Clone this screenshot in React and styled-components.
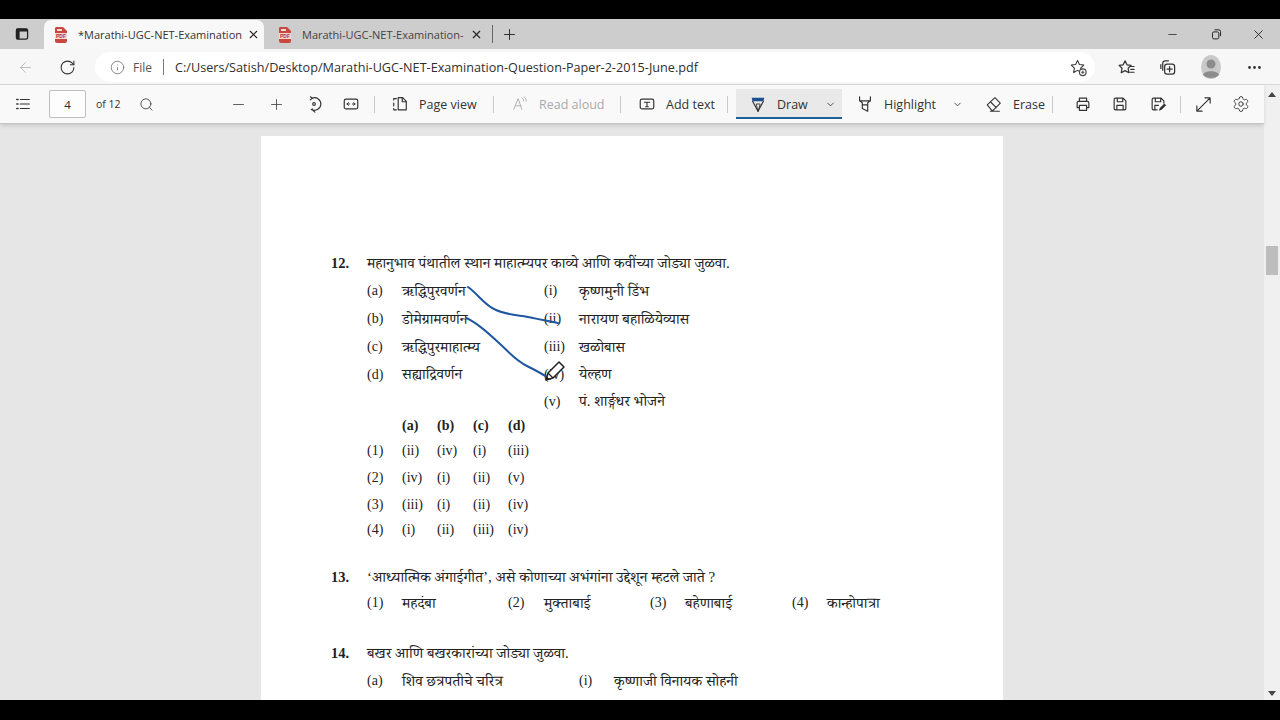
import React from "react";
import styled, { createGlobalStyle } from "styled-components";
import {
  ArrowLeft,
  ChevronDown,
  Info,
  Minus,
  MoreHorizontal,
  Plus,
  RotateCw,
  Search,
  Settings,
  X,
} from "lucide-react";

const Global = createGlobalStyle`
  html, body {
    margin: 0;
    padding: 0;
    background: #000;
  }
`;

const UI_FONT = `"Open Sans", "Noto Sans", "Liberation Sans", sans-serif`;
const DOC_FONT = `"Liberation Serif", "Noto Serif Devanagari", "Noto Sans Devanagari", "Lohit Devanagari", "Noto Sans", serif`;

const Screen = styled.div`
  width: 1280px;
  height: 720px;
  background: #000;
  padding: 19px 0 20px;
  box-sizing: border-box;
  display: flex;
  flex-direction: column;
  overflow: hidden;
  font-family: ${UI_FONT};
  color: #2b2b2b;
`;

/* tab strip */
const TabStrip = styled.div`
  height: 30px;
  flex: none;
  background: #cdcdcd;
  display: flex;
  align-items: flex-end;
`;

const SideButton = styled.div`
  width: 44px;
  height: 30px;
  display: flex;
  align-items: center;
  justify-content: center;
`;

const Tab = styled.div`
  width: ${(p) => p.$w}px;
  height: 29px;
  box-sizing: border-box;
  display: flex;
  align-items: center;
  padding-left: ${(p) => p.$pl}px;
  font-size: 11px;
  color: ${(p) => (p.$active ? "#333" : "#444")};
  background: ${(p) => (p.$active ? "#f8f8f8" : "transparent")};
  border-radius: 7px 7px 0 0;
`;

const TabTitle = styled.span`
  width: ${(p) => p.$w}px;
  margin-left: 10px;
  white-space: nowrap;
`;

const TabClose = styled.span`
  margin-left: 6px;
  display: flex;
`;

const TabDivider = styled.div`
  width: 1px;
  height: 18px;
  margin: 0 0 6px 0;
  background: #666;
`;

const NewTab = styled.div`
  width: 33px;
  height: 30px;
  display: flex;
  align-items: center;
  justify-content: center;
`;

const WindowControls = styled.div`
  margin-left: auto;
  display: flex;
  height: 30px;
  align-items: center;
`;

const WindowButton = styled.div`
  width: 43px;
  display: flex;
  justify-content: center;
`;

/* address bar */
const AddressRow = styled.div`
  height: 36px;
  flex: none;
  background: #f7f7f7;
  border-bottom: 1px solid #d8d8d8;
  box-sizing: border-box;
  padding-top: 1px;
  display: flex;
  align-items: center;
`;

const NavSlot = styled.div`
  width: ${(p) => p.$w}px;
  display: flex;
  justify-content: center;
  flex: none;
`;

const AddressPill = styled.div`
  width: 1000px;
  height: 30px;
  margin-left: 10px;
  flex: none;
  box-sizing: border-box;
  background: #fff;
  border-radius: 15px;
  display: flex;
  align-items: center;
  padding-left: 15px;
  padding-right: 7px;
`;

const FileLabel = styled.span`
  margin-left: 8px;
  font-size: 12px;
  color: #555;
`;

const AddressDivider = styled.span`
  width: 1px;
  height: 16px;
  background: #777;
  margin: 0 11px 0 11px;
`;

const Url = styled.span`
  color: #2f2f2f;
  font-size: 12.65px;
  white-space: nowrap;
`;

const PillEnd = styled.span`
  margin-left: auto;
  display: flex;
`;

const AddressTools = styled.div`
  display: flex;
  align-items: center;
  margin-left: 11px;
`;

const Avatar = styled.svg`
  display: block;
`;

/* viewer body */
const Body = styled.div`
  flex: 1;
  min-height: 0;
  display: flex;
`;

const Viewer = styled.div`
  flex: 1;
  min-width: 0;
  display: flex;
  flex-direction: column;
`;

const Toolbar = styled.div`
  height: 39px;
  flex: none;
  box-sizing: border-box;
  background: #f9f9f9;
  border-bottom: 1px solid #c4c4c4;
  box-shadow: 0 2px 4px rgba(0, 0, 0, 0.12);
  position: relative;
  z-index: 2;
  display: flex;
  align-items: center;
  font-size: 12.5px;
`;

const IconSlot = styled.div`
  width: ${(p) => p.$w || 38}px;
  flex: none;
  display: flex;
  justify-content: center;
  align-items: center;
`;

const PageBox = styled.div`
  width: 37px;
  height: 28px;
  flex: none;
  margin-left: 3px;
  box-sizing: border-box;
  border: 1px solid #bdbdbd;
  border-radius: 2px;
  background: #fdfdfd;
  display: flex;
  align-items: center;
  justify-content: center;
  font-size: 11.5px;
`;

const PageCount = styled.span`
  margin: 0 0 0 10px;
  width: 31px;
  flex: none;
  font-size: 10.5px;
  color: #333;
`;

const Sep = styled.div`
  width: 1px;
  height: 17px;
  flex: none;
  background: #c9c9c9;
  margin: 0 ${(p) => p.$r ?? 11}px 0 ${(p) => p.$l ?? 11}px;
`;

const ToolButton = styled.div`
  flex: none;
  width: ${(p) => p.$w}px;
  height: ${(p) => (p.$active ? 30 : 28)}px;
  box-sizing: border-box;
  display: flex;
  align-items: center;
  gap: ${(p) => p.$gap ?? 8}px;
  padding-left: ${(p) => p.$pl ?? 0}px;
  padding-top: ${(p) => (p.$active ? 2 : 0)}px;
  color: ${(p) => (p.$disabled ? "#a9a9a9" : "#333")};
  background: ${(p) => (p.$active ? "#e9e9e9" : "transparent")};
  border-bottom: ${(p) => (p.$active ? "2px solid #1b6299" : "none")};
`;

const Caret = styled.span`
  display: flex;
  margin-left: ${(p) => p.$ml}px;
`;

const Content = styled.div`
  flex: 1;
  min-height: 0;
  background: #e6e6e6;
  padding-top: 12px;
  display: flex;
  justify-content: center;
  overflow: hidden;
`;

const Scrollbar = styled.div`
  width: 16px;
  flex: none;
  background: #f0f0f0;
  display: flex;
  flex-direction: column;
  align-items: center;
  justify-content: space-between;
  padding: 7px 0 4px;
  box-sizing: border-box;
  position: relative;
`;

const Arrow = styled.div`
  width: 0;
  height: 0;
  border-left: 4px solid transparent;
  border-right: 4px solid transparent;
  border-${(p) => (p.$down ? "top" : "bottom")}: 5px solid #444;
`;

const Thumb = styled.div`
  position: absolute;
  top: 161px;
  left: 2px;
  width: 12px;
  height: 29px;
  background: #bdbdbd;
`;

/* pdf page */
const Page = styled.div`
  width: 742px;
  height: 640px;
  flex: none;
  box-sizing: border-box;
  background: #fff;
  padding: 113px 0 0 70px;
  position: relative;
  font-family: ${DOC_FONT};
  font-size: 14px;
  color: #222;
`;

const Question = styled.div`
  margin-top: ${(p) => p.$mt || 0}px;
`;

const QuestionHead = styled.div`
  display: flex;
  height: 28px;
  line-height: 28px;
`;

const QNo = styled.span`
  width: 36px;
  flex: none;
  font-weight: 700;
  font-size: 14.5px;
`;

const Deva = styled.span`
  font-size: 15px;
`;

const Rows = styled.div`
  padding-left: 36px;
`;

const Row = styled.div`
  display: grid;
  grid-template-columns: ${(p) => p.$cols};
  height: ${(p) => p.$h || 28}px;
  line-height: ${(p) => p.$h || 28}px;
  white-space: nowrap;
`;

const Head = styled.span`
  font-weight: 700;
`;

const Ink = styled.svg`
  position: absolute;
  left: 0;
  top: 0;
  pointer-events: none;
`;

const PenCursor = styled.svg`
  position: absolute;
  left: 282px;
  top: 223px;
`;

const MATCH = "35px 142px 35px 1fr";
const ANSWER = "35px 35px 36px 35px 35px";
const FOUR = "35px 106px 36px 106px 35px 107px 35px 1fr";
const WIDE = "35px 177px 35px 1fr";

const matchRows = [
  ["(a)", "ऋद्धिपुरवर्णन", "(i)", "कृष्णमुनी डिंभ", 28],
  ["(b)", "डोमेग्रामवर्णन", "(ii)", "नारायण बहाळियेव्यास", 28],
  ["(c)", "ऋद्धिपुरमाहात्म्य", "(iii)", "खळोबास", 28],
  ["(d)", "सह्याद्रिवर्णन", "(iv)", "येल्हण", 27],
  ["", "", "(v)", "पं. शार्ङ्गधर भोजने", 27],
];

const answerRows = [
  ["(1)", "(ii)", "(iv)", "(i)", "(iii)", 28],
  ["(2)", "(iv)", "(i)", "(ii)", "(v)", 26],
  ["(3)", "(iii)", "(i)", "(ii)", "(iv)", 28],
  ["(4)", "(i)", "(ii)", "(iii)", "(iv)", 22],
];

const Stroke = ({ d, w = 1.4, fill = "none", color = "#333" }) => (
  <path d={d} fill={fill} stroke={color} strokeWidth={w} strokeLinecap="round" strokeLinejoin="round" />
);

const Icon = ({ size = 18, children }) => (
  <svg width={size} height={size} viewBox="0 0 20 20" fill="none">
    {children}
  </svg>
);

const PdfIcon = () => (
  <svg width="14" height="16" viewBox="0 0 14 16">
    <path d="M2 0h7l4 4v10a2 2 0 0 1-2 2H3a2 2 0 0 1-2-2V1z" fill="#c9473f" />
    <rect x="1" y="6" width="12" height="6" fill="#f3d9d6" />
    <path d="M3 2h5v2H3z" fill="#f3d9d6" />
    <text x="7" y="11" fontSize="5" fontFamily="Liberation Sans" fontWeight="700" textAnchor="middle" fill="#b5342c">PDF</text>
  </svg>
);

export default function App() {
  return (
    <Screen>
      <Global />
      <TabStrip>
        <SideButton>
          <Icon size={16}>
            <rect x="3" y="3.5" width="14" height="13" rx="2" stroke="#222" strokeWidth="1.6" />
            <rect x="3" y="3.5" width="14" height="3.4" fill="#222" />
            <rect x="3" y="3.5" width="4" height="13" fill="#222" />
          </Icon>
        </SideButton>
        <Tab $active $w={220} $pl={10}>
          <PdfIcon />
          <TabTitle $w={163}>*Marathi-UGC-NET-Examination</TabTitle>
          <TabClose>
            <X size={13} color="#222" />
          </TabClose>
        </Tab>
        <Tab $w={228} $pl={14}>
          <PdfIcon />
          <TabTitle $w={162}>Marathi-UGC-NET-Examination-</TabTitle>
          <TabClose>
            <X size={13} color="#222" />
          </TabClose>
        </Tab>
        <TabDivider />
        <NewTab>
          <Plus size={17} strokeWidth={1.3} color="#222" />
        </NewTab>
        <WindowControls>
          <WindowButton>
            <Minus size={13} strokeWidth={1.4} color="#222" />
          </WindowButton>
          <WindowButton>
            <Icon size={14}>
              <rect x="5" y="7" width="9" height="10" rx="2" stroke="#222" strokeWidth="1.4" />
              <path d="M8 4h6a2.500 2.500 0 0 1 2.500 2.500V13" stroke="#222" strokeWidth="1.4" />
            </Icon>
          </WindowButton>
          <WindowButton>
            <X size={15} strokeWidth={1.4} color="#222" />
          </WindowButton>
        </WindowControls>
      </TabStrip>

      <AddressRow>
        <NavSlot $w={50}>
          <ArrowLeft size={17} strokeWidth={1.2} color="#b5b5b5" />
        </NavSlot>
        <NavSlot $w={35}>
          <RotateCw size={17} strokeWidth={1.5} color="#333" />
        </NavSlot>
        <AddressPill>
          <Info size={15} strokeWidth={1.2} color="#666" />
          <FileLabel>File</FileLabel>
          <AddressDivider />
          <Url>C:/Users/Satish/Desktop/Marathi-UGC-NET-Examination-Question-Paper-2-2015-June.pdf</Url>
          <PillEnd>
            <Icon size={19}>
              <Stroke d="M9 2.500l2 4.300 4.600.6-3.300 3.200.8 4.600L9 13l-4.100 2.200.8-4.600-3.300-3.200 4.600-.6z" w={1.1} />
              <circle cx="14.500" cy="15" r="3.500" fill="#fff" stroke="#444" strokeWidth="1.200" />
              <path d="M14.500 13.200v3.600M12.700 15h3.600" stroke="#444" strokeWidth="1" />
            </Icon>
          </PillEnd>
        </AddressPill>
        <AddressTools>
          <NavSlot $w={41}>
            <Icon size={19}>
              <Stroke d="M8.500 3l2 4.200 4.300.6-3.100 3 .8 4.700-4-2.200-4 2.200.8-4.700-3.100-3 4.300-.6z" w={1.3} />
              <Stroke d="M14 9h4M14.500 12h3.500M13.500 15h4.500" w={1.2} />
            </Icon>
          </NavSlot>
          <NavSlot $w={41}>
            <Icon size={19}>
              <Stroke d="M5 13V5.500A2.500 2.500 0 0 1 7.500 3H11" w={1.3} />
              <Stroke d="M3 11V7" w={1.3} />
              <rect x="7" y="6.500" width="10.500" height="10.500" rx="2.500" stroke="#333" strokeWidth="1.3" />
              <Stroke d="M12.200 9v5.500M9.500 11.700H15" w={1.3} />
            </Icon>
          </NavSlot>
          <NavSlot $w={45}>
            <Avatar width="22" height="24" viewBox="0 0 22 24">
              <ellipse cx="11" cy="12" rx="10" ry="12" fill="#c9c9c9" />
              <circle cx="11" cy="9" r="4.500" fill="#8c8c8c" />
              <path d="M3 20c1-5 15-5 16 0-3 4-13 4-16 0z" fill="#8c8c8c" />
            </Avatar>
          </NavSlot>
          <NavSlot $w={42}>
            <MoreHorizontal size={17} strokeWidth={2} color="#333" />
          </NavSlot>
        </AddressTools>
      </AddressRow>

      <Body>
        <Viewer>
          <Toolbar>
            <IconSlot $w={46}>
              <Icon size={18}>
                <Stroke d="M7 5h10M7 10h10M7 15h10" w={1.3} />
                <Stroke d="M3 5h1.500M3 10h1.500M3 15h1.500" w={1.5} />
              </Icon>
            </IconSlot>
            <PageBox>4</PageBox>
            <PageCount>of 12</PageCount>
            <IconSlot $w={38}>
              <Search size={15} strokeWidth={1.3} color="#333" />
            </IconSlot>
            <IconSlot $w={54} />
            <IconSlot>
              <Minus size={17} strokeWidth={1.2} color="#444" />
            </IconSlot>
            <IconSlot>
              <Plus size={17} strokeWidth={1.2} color="#444" />
            </IconSlot>
            <IconSlot $w={37}>
              <Icon size={18}>
                <Stroke d="M8 3.500a7 7 0 1 1-1 12.500M11 19l-3.500-3 1-.5" w={1.3} />
                <Stroke d="M8 3.500L6 2M8 3.500L6 5.500" w={1.3} />
                <circle cx="10" cy="10" r="1.500" stroke="#333" strokeWidth="1.200" />
              </Icon>
            </IconSlot>
            <IconSlot>
              <Icon size={18}>
                <rect x="2.500" y="4.500" width="15" height="11" rx="2" stroke="#333" strokeWidth="1.3" />
                <Stroke d="M5.500 10h3M7 8.500L5.500 10 7 11.500M14.500 10h-3M13 8.500l1.500 1.500-1.500 1.500" w={1.1} />
              </Icon>
            </IconSlot>
            <Sep $l={4} $r={16} />
            <ToolButton $w={102} $gap={10}>
              <Icon size={18}>
                <Stroke d="M3 5.500V4h3M3 9v3M3 15v1.500h3" w={1.3} />
                <Stroke d="M8 3h5l4 4v9.500H8z" w={1.3} />
                <Stroke d="M12.500 3v4.500H17" w={1.3} />
              </Icon>
              Page view
            </ToolButton>
            <Sep $l={0} $r={17} />
            <ToolButton $w={102} $disabled $gap={10}>
              <Icon size={18}>
                <Stroke d="M3 16L8 4l4 12M5 12h6" w={1} color="#aaa" />
                <Stroke d="M12 3c1.500 1 2 2 2 3.500M14.500 2c2 1.500 2.500 3 2.500 5" w={1} color="#aaa" />
              </Icon>
              Read aloud
            </ToolButton>
            <Sep $l={7} $r={17} />
            <ToolButton $w={89} $gap={10}>
              <Icon size={18}>
                <rect x="2.500" y="4.500" width="15" height="11" rx="2" stroke="#333" strokeWidth="1.3" />
                <Stroke d="M7 8h6M10 8v5M8.500 13h3" w={1.2} />
              </Icon>
              Add text
            </ToolButton>
            <Sep $l={0} $r={8} />
            <ToolButton $active $w={106} $pl={13} $gap={10}>
              <Icon size={18}>
                <path d="M3 3h14l-1 4H4z" fill="#1d4f91" />
                <Stroke d="M4 7l6 11 6-11" w={1.3} />
                <Stroke d="M10 18l-2-8h4z" w={1} />
              </Icon>
              Draw
              <Caret $ml={7}>
                <ChevronDown size={11} color="#444" />
              </Caret>
            </ToolButton>
            <ToolButton $w={126} $pl={14} $gap={10}>
              <Icon size={18}>
                <Stroke d="M4 2v4.500l3 2V11h6V8.500l3-2V2M4 6.500h12M7 11v4l6 3v-7" w={1.3} />
              </Icon>
              Highlight
              <Caret $ml={6}>
                <ChevronDown size={11} color="#444" />
              </Caret>
            </ToolButton>
            <ToolButton $w={84} $pl={17} $gap={10}>
              <Icon size={18}>
                <Stroke d="M2.500 11L11 3l6 6-8 8H7.500zM6 7.500l6.500 6.500M6 18h10" w={1.2} />
              </Icon>
              Erase
            </ToolButton>
            <Sep $l={0} $r={11} />
            <IconSlot $w={37}>
              <Icon size={18}>
                <Stroke d="M6 7V3.500h8V7M6 14H3.500V8.500A1.500 1.500 0 0 1 5 7h10a1.500 1.500 0 0 1 1.500 1.500V14H14M6 11.500h8V17H6z" w={1.3} />
              </Icon>
            </IconSlot>
            <IconSlot>
              <Icon size={18}>
                <Stroke d="M3.500 5a1.500 1.500 0 0 1 1.500-1.500h8.500l3 3V15a1.500 1.500 0 0 1-1.500 1.500H5A1.500 1.500 0 0 1 3.500 15zM7 3.500v4h6v-4M6.500 16.500v-5h7v5" w={1.3} />
              </Icon>
            </IconSlot>
            <IconSlot>
              <Icon size={18}>
                <Stroke d="M9 16.500H5A1.500 1.500 0 0 1 3.500 15V5A1.500 1.500 0 0 1 5 3.500h8.500l3 3V9M7 3.500v4h6v-4M6.500 16.500v-5h4" w={1.3} />
                <path d="M11 17.500l1-3 5-5 2 2-5 5z" fill="#333" />
              </Icon>
            </IconSlot>
            <Sep $l={3} $r={3} />
            <IconSlot $w={38}>
              <Icon size={19}>
                <Stroke d="M3 17L17 3M11.500 3H17v5.500M3 11.500V17h5.500" w={1.2} />
              </Icon>
            </IconSlot>
            <IconSlot $w={37}>
              <Settings size={18} strokeWidth={1.2} color="#333" />
            </IconSlot>
          </Toolbar>

          <Content>
            <Page>
              <Question>
                <QuestionHead>
                  <QNo>12.</QNo>
                  <Deva>महानुभाव पंथातील स्थान माहात्म्यपर काव्ये आणि कवींच्या जोड्या जुळवा.</Deva>
                </QuestionHead>
                <Rows>
                  {matchRows.map(([a, b, c, d, h]) => (
                    <Row key={c} $cols={MATCH} $h={h}>
                      <span>{a}</span>
                      <Deva>{b}</Deva>
                      <span>{c}</span>
                      <Deva>{d}</Deva>
                    </Row>
                  ))}
                  <Row $cols={ANSWER} $h={22}>
                    <span />
                    <Head>(a)</Head>
                    <Head>(b)</Head>
                    <Head>(c)</Head>
                    <Head>(d)</Head>
                  </Row>
                  {answerRows.map(([n, a, b, c, d, h]) => (
                    <Row key={n} $cols={ANSWER} $h={h}>
                      <span>{n}</span>
                      <span>{a}</span>
                      <span>{b}</span>
                      <span>{c}</span>
                      <span>{d}</span>
                    </Row>
                  ))}
                </Rows>
              </Question>

              <Question $mt={22}>
                <QuestionHead>
                  <QNo>13.</QNo>
                  <Deva>‘आध्यात्मिक अंगाईगीत’, असे कोणाच्या अभंगांना उद्देशून म्हटले जाते ?</Deva>
                </QuestionHead>
                <Rows>
                  <Row $cols={FOUR} $h={24}>
                    <span>(1)</span>
                    <Deva>महदंबा</Deva>
                    <span>(2)</span>
                    <Deva>मुक्ताबाई</Deva>
                    <span>(3)</span>
                    <Deva>बहेणाबाई</Deva>
                    <span>(4)</span>
                    <Deva>कान्होपात्रा</Deva>
                  </Row>
                </Rows>
              </Question>

              <Question $mt={24}>
                <QuestionHead>
                  <QNo>14.</QNo>
                  <Deva>बखर आणि बखरकारांच्या जोड्या जुळवा.</Deva>
                </QuestionHead>
                <Rows>
                  <Row $cols={WIDE}>
                    <span>(a)</span>
                    <Deva>शिव छत्रपतीचे चरित्र</Deva>
                    <span>(i)</span>
                    <Deva>कृष्णाजी विनायक सोहनी</Deva>
                  </Row>
                  <Row $cols={WIDE}>
                    <span>(b)</span>
                    <Deva>पेशव्यांची बखर</Deva>
                    <span>(ii)</span>
                    <Deva>मल्हार रामराव</Deva>
                  </Row>
                </Rows>
              </Question>

              <Ink width="742" height="640" viewBox="0 0 742 640">
                <path
                  d="M207 151C216 157 224 170 235 174C248 180 262 179 272 182C282 184 290 186 297 187"
                  fill="none"
                  stroke="#1e56a0"
                  strokeWidth="2"
                  strokeLinecap="round"
                />
                <path
                  d="M205 182C216 186 228 198 238 207C248 216 254 224 266 230C274 234 282 238 289 243"
                  fill="none"
                  stroke="#1e56a0"
                  strokeWidth="2"
                  strokeLinecap="round"
                />
              </Ink>
              <PenCursor width="24" height="24" viewBox="0 0 24 24">
                <path d="M3 21l2-7L16 3l5 5-11 11z" fill="#fff" stroke="#222" strokeWidth="1.500" strokeLinejoin="round" />
                <path d="M5 14l5 5" stroke="#222" strokeWidth="1.200" />
                <path d="M3 21l1-3.500 2.500 2.500z" fill="#222" />
              </PenCursor>
            </Page>
          </Content>
        </Viewer>
        <Scrollbar>
          <Arrow />
          <Thumb />
          <Arrow $down />
        </Scrollbar>
      </Body>
    </Screen>
  );
}
